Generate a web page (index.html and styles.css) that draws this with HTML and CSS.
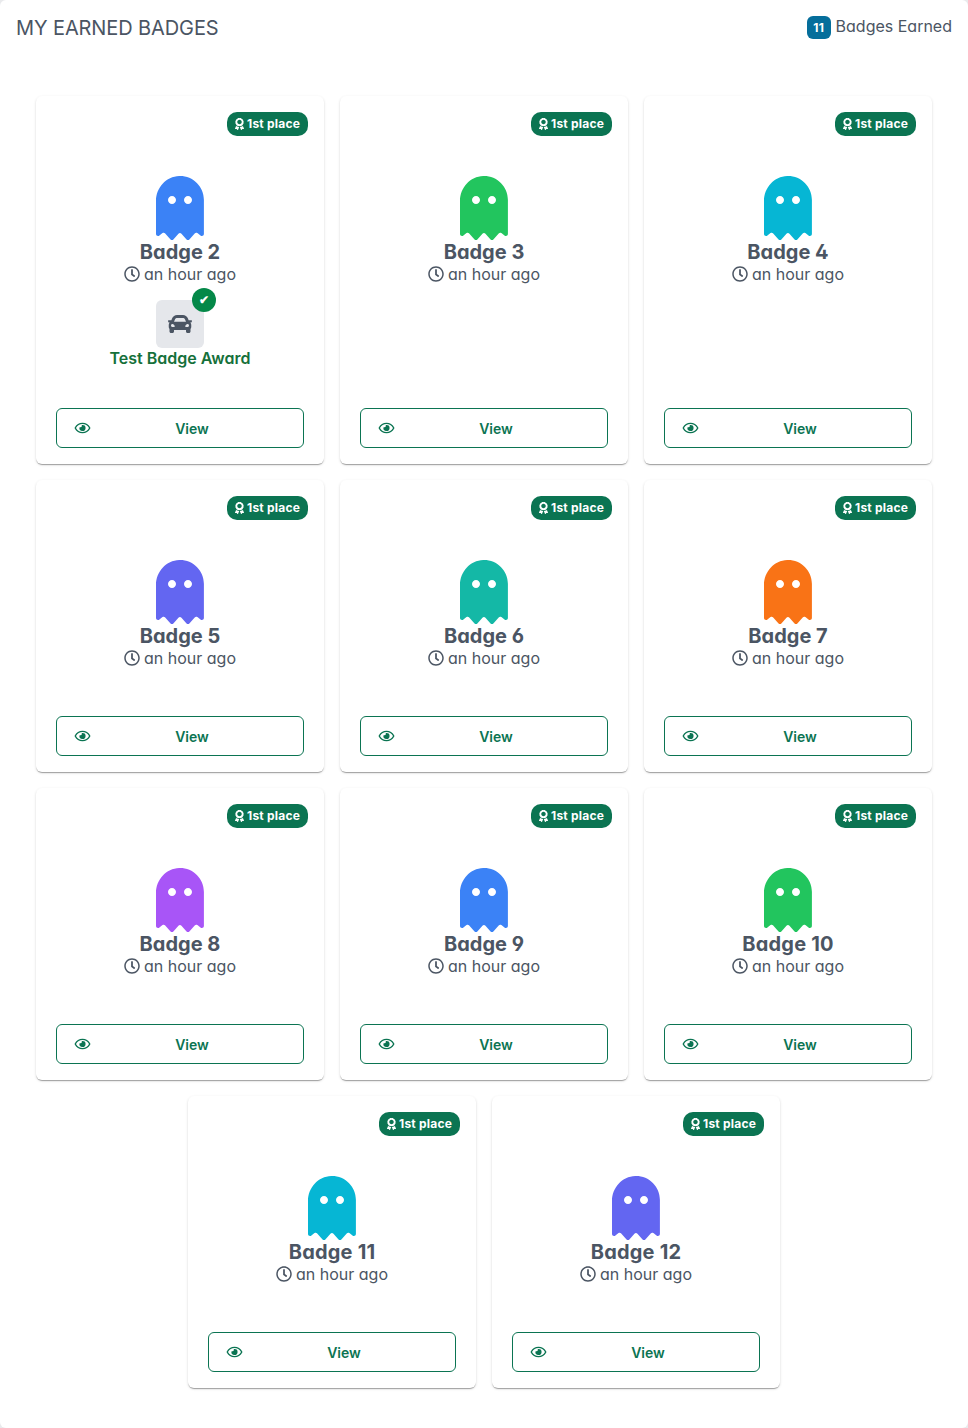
FILE: index.html
```html
<!DOCTYPE html>
<html lang="en">
<head>
<meta charset="utf-8">
<title>My Earned Badges</title>
<link rel="stylesheet" href="styles.css">
</head>
<body>
<svg class="sprite" aria-hidden="true">
  <symbol id="ghost" viewBox="0 0 384 512">
    <path d="M186.1.1C81 3.200 0 94.900 0 200.100v263.900c0 14.200 17.200 21.400 27.200 11.300l24.900-18.500c6.600-4.900 16-4 21.500 2.300l42.700 48c6.200 6.200 16.400 6.200 22.600 0l40.700-45.800c6.400-7.200 17.600-7.200 24 0l40.700 45.800c6.200 6.200 16.400 6.200 22.600 0l42.700-48c5.500-6.200 14.900-7.200 21.500-2.300l24.900 18.500c10 10.100 27.200 2.900 27.200-11.300V192C384 84 294.800-3.200 186.100.1zM128 224c-17.700 0-32-14.300-32-32s14.300-32 32-32 32 14.300 32 32-14.300 32-32 32zm128 0c-17.700 0-32-14.300-32-32s14.300-32 32-32 32 14.300 32 32-14.300 32-32 32z"/>
  </symbol>
  <symbol id="clock" viewBox="0 0 512 512">
    <path d="M256 8C119 8 8 119 8 256s111 248 248 248 248-111 248-248S393 8 256 8zm0 448c-110.500 0-200-89.500-200-200S145.500 56 256 56s200 89.500 200 200-89.500 200-200 200zm61.800-104.400l-84.900-61.700c-3.100-2.300-4.900-5.900-4.900-9.700V116c0-6.600 5.400-12 12-12h32c6.600 0 12 5.400 12 12v141.700l66.800 48.600c5.400 3.900 6.500 11.400 2.600 16.800L334.600 349c-3.900 5.300-11.400 6.500-16.800 2.600z"/>
  </symbol>
  <symbol id="eye" viewBox="0 0 576 512">
    <path d="M288 144a110.940 110.940 0 0 0-31.240 5 55.400 55.400 0 0 1 7.240 27 56 56 0 0 1-56 56 55.400 55.400 0 0 1-27-7.240A111.710 111.710 0 1 0 288 144zm284.520 97.400C518.290 135.590 410.930 64 288 64S57.680 135.640 3.480 241.410a32.350 32.350 0 0 0 0 29.190C57.710 376.410 165.070 448 288 448s230.320-71.640 284.520-177.410a32.350 32.350 0 0 0 0-29.190zM288 400c-98.650 0-189.090-55-237.930-144C98.910 167 189.340 112 288 112s189.090 55 237.930 144C477.100 345 386.660 400 288 400z"/>
  </symbol>
  <symbol id="award" viewBox="0 0 384 512">
    <path d="M97.120 362.630c-8.690-8.690-4.160-6.240-25.120-11.850-9.510-2.550-17.870-7.450-25.430-13.320L1.200 448.700c-4.390 10.770 3.810 22.470 15.430 22.030l52.690-2.010L105.560 507c8 8.440 22.040 5.810 26.430-4.960l52.050-127.620c-10.840 6.040-22.870 9.580-35.310 9.580-19.500 0-37.820-7.590-51.610-21.370zM382.800 448.700l-45.370-111.240c-7.560 5.880-15.920 10.770-25.430 13.320-21.070 5.640-16.450 3.180-25.120 11.850-13.790 13.780-32.120 21.370-51.620 21.370-12.440 0-24.470-3.550-35.310-9.580L252 502.040c4.390 10.770 18.440 13.400 26.430 4.960l36.250-38.280 52.690 2.010c11.620.44 19.820-11.270 15.430-22.030zM263 340c15.280-15.550 17.030-14.210 38.790-20.140 13.890-3.790 24.750-14.840 28.470-28.980 7.480-28.400 5.540-24.970 25.950-45.750 10.170-10.350 14.140-25.440 10.420-39.580-7.470-28.380-7.480-24.420 0-52.830 3.720-14.140-.25-29.230-10.420-39.580-20.410-20.780-18.470-17.360-25.950-45.750-3.720-14.140-14.580-25.190-28.470-28.980-27.880-7.610-24.520-5.620-44.950-26.410-10.170-10.350-25-14.400-38.890-10.610-27.870 7.600-23.980 7.610-51.900 0-13.890-3.790-28.720.25-38.890 10.610-20.410 20.780-17.050 18.800-44.940 26.410-13.890 3.790-24.750 14.840-28.470 28.980-7.470 28.390-5.540 24.970-25.950 45.750-10.170 10.350-14.150 25.440-10.420 39.580 7.470 28.360 7.480 24.400 0 52.820-3.720 14.140.25 29.230 10.420 39.590 20.410 20.780 18.470 17.350 25.950 45.750 3.720 14.140 14.580 25.190 28.470 28.980C104.600 325.960 106.270 325 121 340c13.230 13.470 33.840 15.880 49.740 5.820a39.676 39.676 0 0 1 42.530 0c15.890 10.060 36.500 7.650 49.730-5.820zM97.660 175.960c0-53.030 42.240-96.020 94.340-96.020s94.340 42.990 94.340 96.020-42.240 96.020-94.340 96.020-94.340-42.990-94.340-96.020z"/>
  </symbol>
  <symbol id="car" viewBox="0 0 512 512">
    <path d="M499.990 176h-59.870l-16.640-41.600C406.380 91.630 365.570 64 319.500 64h-127c-46.060 0-86.880 27.630-103.990 70.400L71.870 176H12.010C4.200 176-1.530 183.340.37 190.910l6 24C7.700 220.250 12.500 224 18.010 224h20.070C24.650 235.730 16 252.780 16 272v48c0 16.120 6.160 30.670 16 41.930V416c0 17.670 14.330 32 32 32h32c17.670 0 32-14.330 32-32v-32h256v32c0 17.670 14.330 32 32 32h32c17.670 0 32-14.330 32-32v-54.070c9.840-11.250 16-25.800 16-41.930v-48c0-19.220-8.650-36.270-22.070-48H494c5.510 0 10.310-3.750 11.640-9.090l6-24c1.890-7.570-3.840-14.910-11.650-14.910zm-352.060-17.830c7.290-18.220 24.940-30.170 44.570-30.170h127c19.630 0 37.280 11.950 44.570 30.170L384 208H128l19.930-49.830zM96 319.800c-19.200 0-32-12.760-32-31.900S76.800 256 96 256s48 28.710 48 47.850-28.800 15.950-48 15.950zm320 0c-19.200 0-48 3.190-48-15.950S396.800 256 416 256s32 12.760 32 31.900-12.800 31.900-32 31.900z"/>
  </symbol>
</svg>
<main class="panel">
  <header class="header">
    <h1 class="title">MY EARNED BADGES</h1>
    <div class="summary"><span class="count">11</span><span>Badges Earned</span></div>
  </header>
  <div class="badges" id="badges"></div>
</main>
<script src="badges.js"></script>
</body>
</html>
```
FILE: styles.css
```css
* { box-sizing: border-box; }

body {
  margin: 0;
  background: #e9eaec;
  color: #4b5563;
  font: 16px/20px "Inter", sans-serif;
  font-feature-settings: "cv02", "cv03", "cv04", "cv11";
}

.sprite { display: none; }

.panel {
  height: 1428px;
  background: #fff;
  border-radius: 6px;
}

.header {
  display: flex;
  justify-content: space-between;
  padding: 16px 16px 0;
  height: 56px;
}

.title {
  margin: 0;
  font-size: 20px;
  font-weight: 400;
  line-height: 25px;
  letter-spacing: -.1px;
}

.summary {
  display: flex;
  gap: 5px;
  line-height: 21px;
}

.count {
  width: 24px;
  height: 23px;
  border-radius: 6px;
  background: #056e9b;
  color: #fff;
  font-size: 12px;
  font-weight: 700;
  line-height: 23px;
  letter-spacing: .5px;
  text-indent: .5px;
  text-align: center;
}

.badges {
  display: flex;
  flex-wrap: wrap;
  justify-content: center;
  gap: 16px;
  padding: 40px 16px 0;
}

.card {
  display: flex;
  flex-direction: column;
  width: 288px;
  padding: 16px 20px;
  border-radius: 6px;
  box-shadow: 0 2px 1px -1px rgba(0, 0, 0, .2), 0 1px 1px 0 rgba(0, 0, 0, .14), 0 1px 3px 0 rgba(0, 0, 0, .12);
}

.place {
  display: flex;
  align-items: center;
  align-self: flex-end;
  gap: 3px;
  height: 24px;
  margin-right: -4px;
  padding: 0 8px;
  border-radius: 10px;
  background: #0b7452;
  color: #fff;
  font-size: 12px;
  font-weight: 700;
  font-feature-settings: normal;
  letter-spacing: .2px;
}

.place-icon { width: 9px; height: 12px; fill: #fff; }

.ghost {
  align-self: center;
  width: 48px;
  height: 64px;
  margin-top: 40px;
}

.name {
  margin: 0;
  font-size: 20px;
  font-weight: 700;
  line-height: 24px;
  text-align: center;
}

.name-wide { letter-spacing: .2px; }

.time {
  display: flex;
  justify-content: center;
  align-items: center;
  gap: 4px;
}

.time-icon { width: 16px; height: 16px; fill: currentColor; }

.award {
  display: flex;
  flex-direction: column;
  align-items: center;
  margin-top: 16px;
  color: #15703a;
  font-weight: 600;
}

.award-tile {
  position: relative;
  display: flex;
  align-items: center;
  justify-content: center;
  width: 48px;
  height: 48px;
  border-radius: 6px;
  background: #e5e7eb;
}

.award-icon { width: 24px; height: 24px; fill: #4b5563; }

.award-check {
  position: absolute;
  top: -12px;
  right: -12px;
  width: 24px;
  height: 24px;
  border-radius: 50%;
  background: #048848;
  color: #fff;
  font-size: 12px;
  line-height: 24px;
  text-align: center;
}

.view {
  display: flex;
  align-items: center;
  height: 40px;
  margin-top: auto;
  padding: 0 17px;
  border: 1px solid #0b7452;
  border-radius: 6px;
  background: none;
  color: #0b7452;
  font: 600 14px/20px "Inter", sans-serif;
}

.spacer { height: 48px; }

.award-gap { height: 40px; }

.view-icon { width: 17px; height: 14px; margin-bottom: 1px; fill: currentColor; }

.view-label { flex: 1; padding: 1px 0 0 7px; text-align: center; }

.blue { fill: #3b82f6; }
.green { fill: #22c55e; }
.cyan { fill: #06b6d4; }
.indigo { fill: #6366f1; }
.teal { fill: #14b8a6; }
.orange { fill: #f97316; }
.purple { fill: #a855f7; }
```
FILE: badges.js
```js
const colors = ["blue", "green", "cyan", "indigo", "teal", "orange", "purple", "blue", "green", "cyan", "indigo"];

const award = `
  <div class="award">
    <div class="award-tile">
      <svg class="award-icon"><use href="#car"/></svg>
      <span class="award-check">✔</span>
    </div>
    <span>Test Badge Award</span>
  </div>
  <div class="award-gap"></div>`;

document.getElementById("badges").innerHTML = colors.map((color, i) => `
  <article class="card">
    <div class="place"><svg class="place-icon"><use href="#award"/></svg>1st place</div>
    <svg class="ghost ${color}"><use href="#ghost"/></svg>
    <h2 class="name ${i >= 8 ? "name-wide" : ""}">Badge ${i + 2}</h2>
    <div class="time"><svg class="time-icon"><use href="#clock"/></svg>an hour ago</div>
    ${i === 0 ? award : '<div class="spacer"></div>'}
    <button class="view"><svg class="view-icon"><use href="#eye"/></svg><span class="view-label">View</span></button>
  </article>`).join("");
```
